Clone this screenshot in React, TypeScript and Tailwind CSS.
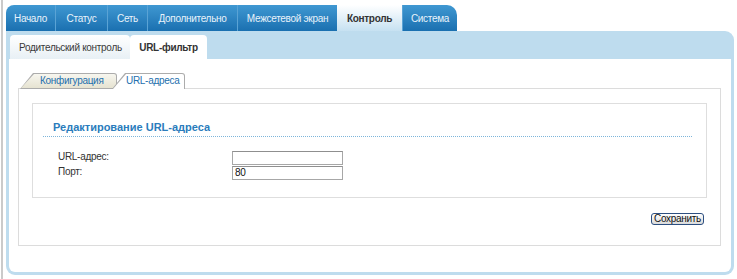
import React from 'react';

const mainTabs = [
  { label: 'Начало', w: 'w-[49px]' },
  { label: 'Статус', w: 'w-[52px]' },
  { label: 'Сеть', w: 'w-[40px]' },
  { label: 'Дополнительно', w: 'w-[90px]' },
  { label: 'Межсетевой экран', w: 'w-[100px]' },
  { label: 'Контроль', w: 'w-[65px]', active: true },
  { label: 'Система', w: 'w-[55px]' },
];

function InnerTab({ label, active, className }: { label: string; active?: boolean; className: string }) {
  return (
    <div className={`relative h-[16px] ${className}`}>
      <div className="absolute inset-0 rounded-tr-[3px] bg-[#acacac] [clip-path:polygon(13px_0,100%_0,100%_100%,0_100%)]" />
      <div
        className={`absolute left-[1px] right-[1px] top-[1px] rounded-tr-[2px] [clip-path:polygon(13px_0,100%_0,100%_100%,0_100%)] ${
          active ? 'bottom-0 bg-white' : 'bottom-[1px] bg-gradient-to-b from-[#f7f6ef] to-[#e6e3d1]'
        }`}
      />
      <span className={`relative block leading-[16px] text-[#2470ae] ${active ? 'pl-[14px]' : 'pl-[20px]'}`}>{label}</span>
    </div>
  );
}

export default function App() {
  return (
    <div className="relative w-[737px] h-[279px] bg-white font-['Liberation_Sans',Arial,sans-serif] text-[10px] tracking-[-0.3px] text-[#333]">
      {/* page edge */}
      <div className="absolute left-[1px] top-0 bottom-0 w-[2px] bg-[#cacaca]" />

      <div className="pl-[6px] pt-[5px]">
        {/* Main menu */}
        <div className="flex h-[26px]">
          {mainTabs.map((t, i) => (
            <div
              key={t.label}
              className={`${t.w} flex items-center justify-center ${
                i === 0 ? 'rounded-tl-[8px]' : 'border-l border-[#5aa3d5]'
              } ${i === mainTabs.length - 1 ? 'rounded-tr-[10px]' : ''} ${
                t.active
                  ? 'bg-gradient-to-b from-white to-[#c6e1f1] font-bold text-[#333] border-l-0'
                  : 'bg-gradient-to-b from-[#3f98d2] to-[#1a70b0] text-[#e8f3fb]'
              }`}
            >
              {t.label}
            </div>
          ))}
        </div>

        {/* Panel */}
        <div className="w-[728px] h-[244px] bg-[#bedcee] rounded-tr-[9px] rounded-b-[9px] px-[3px] pb-[3px] flex flex-col">
          <div className="flex h-[28px] pt-[4px] pl-[1px]">
            <div className="w-[120px] rounded-t-[4px] bg-gradient-to-b from-white to-[#e8f0f5] flex items-center pl-[9px] text-[#3a3a3a]">
              Родительский контроль
            </div>
            <div className="w-[77px] rounded-t-[4px] bg-white flex items-center justify-center font-bold text-[#333]">
              URL-фильтр
            </div>
          </div>

          <div className="flex-1 bg-white rounded-b-[6px] pl-[9px] pt-[14px]">
            <div className="relative z-10 flex pl-[2px] -mb-[1px]">
              <InnerTab label="Конфигурация" className="w-[97px]" />
              <InnerTab label="URL-адреса" active className="w-[73px] -ml-[5px]" />
            </div>

            <div className="w-[703px] h-[158px] border border-[#dcdcdc] pt-[14px] px-[13px]">
              <div className="h-[95px] border border-[#dedede]">
                <div className="mt-[16px] ml-[10px] mr-[14px] pb-[2px] border-b border-dotted border-[#7db5da]">
                  <div className="pl-[10px] h-[14px] leading-[14px] text-[11px] font-bold tracking-normal text-[#2a7cbc]">
                    Редактирование URL-адреса
                  </div>
                </div>

                <div className="mt-[14px] pl-[25px] flex flex-col gap-[1px]">
                  <div className="flex h-[14px]">
                    <div className="w-[174px] leading-[11px]">URL-адрес:</div>
                    <div className="w-[111px] h-[14px] border border-[#a7a7a7] border-t-[#8f8f8f] bg-white" />
                  </div>
                  <div className="flex h-[14px]">
                    <div className="w-[174px] leading-[11px]">Порт:</div>
                    <div className="w-[111px] h-[14px] border border-[#a7a7a7] border-t-[#8f8f8f] bg-white pl-[2px] leading-[12px] text-[#111]">
                      80
                    </div>
                  </div>
                </div>
              </div>

              <div className="mt-[15px] flex justify-end pr-[3px]">
                <button className="h-[12px] px-[2px] rounded-[3px] border border-[#2d4f80] bg-gradient-to-b from-white to-[#dadada] leading-[10px] text-[#111]">
                  Сохранить
                </button>
              </div>
            </div>
          </div>
        </div>
      </div>
    </div>
  );
}
